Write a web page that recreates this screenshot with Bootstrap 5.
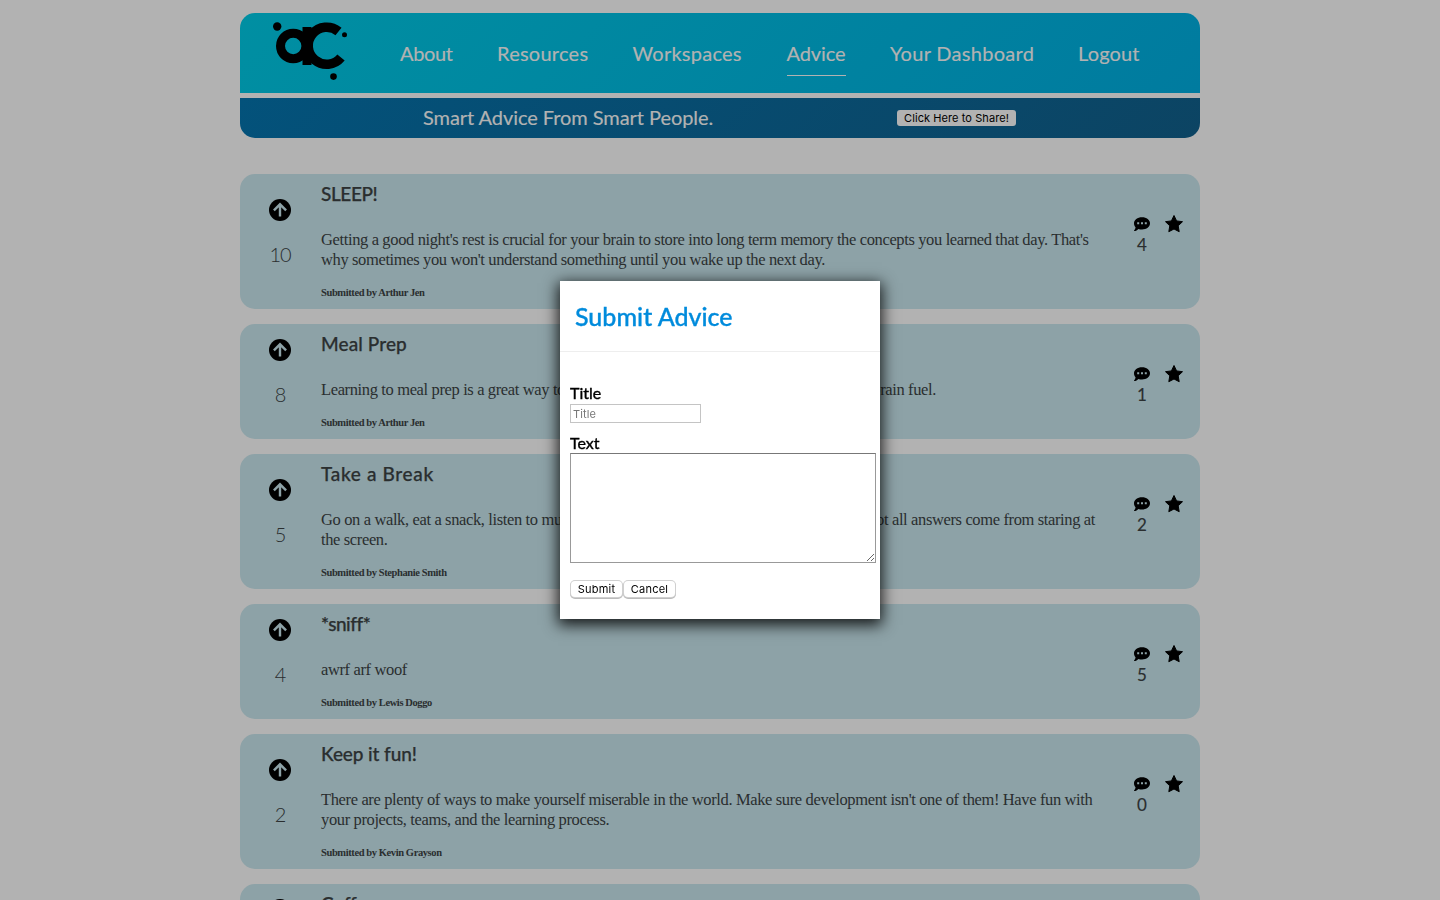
<!DOCTYPE html>
<html lang="en">
<head>
<meta charset="utf-8">
<title>Advice</title>
<link href="https://cdn.jsdelivr.net/npm/bootstrap@5.3.0/dist/css/bootstrap.min.css" rel="stylesheet">
<script src="https://cdn.jsdelivr.net/npm/bootstrap@5.3.0/dist/js/bootstrap.bundle.min.js"></script>
<style>
body{background:#b2b2b2;font-family:Lato,sans-serif;color:#2a2e2f;height:900px;overflow:hidden;line-height:20px}
.page{width:960px;height:900px;overflow:hidden;padding-top:13px}
.topbar{height:80px;border-radius:15px 15px 0 0;background:linear-gradient(135deg,#008fa2,#007b9f);padding-left:32px}
.logo{width:77px;height:60px;margin-top:8px}
.mainnav{margin-left:51px;padding-top:19px}
.mainnav a{color:#b2b2b2;font-size:20px;line-height:42px;height:44px;margin-right:44.5px;text-decoration:none;white-space:nowrap;-webkit-text-stroke:.2px}
.mainnav a.active{border-bottom:1px solid #b2b2b2}
.w1{width:52.5px;letter-spacing:-.35px}.w2{width:91px;letter-spacing:.25px}.w3{width:109.500px;letter-spacing:.25px}.w4{width:59px;letter-spacing:-.1px}.w5{width:143.500px;letter-spacing:.3px}.w6{width:62px;letter-spacing:.15px}
.subbar{height:40px;margin-top:5px;border-radius:0 0 15px 15px;background:linear-gradient(135deg,#03527b,#0c4463);color:#b2b2b2}
.slogan{font-size:20px;margin:-2px 0 0 183px;width:474px;letter-spacing:-.06px;-webkit-text-stroke:.2px}
.mini{font:11px/16px Inter,sans-serif;letter-spacing:.08px;border:0;border-radius:3px;padding:0 7px;white-space:nowrap;color:#000}
.share{background:#b2b2b2;width:119px;height:16px}
.tips{padding-top:36px}
.tip{background:#8da2a7;border-radius:15px;margin-bottom:15px;height:115px}
.tip.tall{height:135px}
.vote{width:80px;padding-bottom:20px}
.vote svg{width:22px;height:22px}
.vote span{font-size:20px;font-weight:300;margin-top:23px;letter-spacing:-1px}
.words{width:790px;padding:10px 0 0 1px}
.words h2{font-size:19px;line-height:20px;margin:0 0 26px;font-weight:500;-webkit-text-stroke:.25px}
.words .copy{font:16.5px/20px "Liberation Serif",serif;letter-spacing:-.37px;margin:0 0 13px;white-space:nowrap}
.words footer{font:bold 10.5px/20px "Liberation Serif",serif;letter-spacing:-.4px}
.acts{margin-left:24px;padding-top:40px}
.acts svg{height:20px;display:block}
.acts .star{margin-left:14.5px}
.acts .cnt{font-size:17px;line-height:21px;text-align:center;-webkit-text-stroke:.15px}
.dialog{position:fixed;left:560px;top:281px;width:320px;height:338px;background:#fff;box-shadow:0 4px 14px 2px rgba(0,0,0,.85);color:#000}
.dialog h1{font-size:25px;line-height:70px;height:71px;margin:0;padding-left:15px;color:#008bdc;border-bottom:1px solid #eee;-webkit-text-stroke:.35px}
.dialog form{padding:30px 4px 0 10px}
.dialog label{display:block;font-size:16px;line-height:19px;height:21px;padding-top:1px;-webkit-text-stroke:.4px}
.dialog input{display:block;width:131px;height:19px;border:1px solid #c4c4c4;padding:0 2px;font:11px Inter,sans-serif;letter-spacing:.1px;margin:1px 0 9px;outline:0}
.dialog input::placeholder{color:#777}
.dialog textarea{display:block;width:306px;height:110px;border:1px solid #999;border-top-color:#777;margin-bottom:18px}
.dialog .mini{background:#fff;width:51px;height:16px;padding:0;margin:0 1px;letter-spacing:.25px;border-radius:4px;box-shadow:0 0 0 1px #d0d0d0,0 1px 0 1px #bbb}
</style>
</head>
<body>
<svg width="0" height="0" class="position-absolute">
<symbol id="up" viewBox="0 0 22 22"><circle cx="11" cy="11" r="11"/><path d="M11 17.500V5.500M4.900 11.400L11 5.300l6.100 6.100" fill="none" stroke="#8da2a7" stroke-width="2.400"/></symbol>
<symbol id="chat" viewBox="0 0 16 20"><path d="M8 3.200c4.600 0 8 2.700 8 6.100s-3.400 6.200-8 6.200c-1.300 0-2.500-.2-3.600-.6C3.300 15.800 1.900 17 .2 17c-.3 0-.3-.4-.1-.6.8-.8 1.300-1.700 1.500-2.900C.6 12.400 0 10.900 0 9.300 0 5.900 3.400 3.200 8 3.200z"/><path d="M3.200 8.300h2v2h-2zM7 8.300h2v2H7zM10.800 8.300h2v2h-2z" fill="#8da2a7"/></symbol>
<symbol id="star" viewBox="0 0 18 20"><path d="M9 1.500l2.600 5.400 5.900.8-4.300 4.100 1 5.900L9 15l-5.200 2.700 1-5.900L.5 7.700l5.900-.8z" stroke="#000" stroke-width="1" stroke-linejoin="round"/></symbol>
</svg>
<main class="page mx-auto">
<header class="topbar d-flex">
<svg class="logo flex-shrink-0" viewBox="0 0 77 60"><circle cx="5.200" cy="5.500" r="4.200"/><circle cx="72.500" cy="13.700" r="2.500"/><circle cx="61.500" cy="55.600" r="3.300"/><circle cx="21.200" cy="25" r="12.700" fill="none" stroke="#000" stroke-width="9"/><path d="M30.500 6h9v38h-9z"/><path d="M66.500 10.500A18.500 18.500 0 1 0 69 36.500" fill="none" stroke="#000" stroke-width="9.500"/></svg>
<nav class="mainnav d-flex"><a href="#" class="w1">About</a><a href="#" class="w2">Resources</a><a href="#" class="w3">Workspaces</a><a href="#" class="w4 active">Advice</a><a href="#" class="w5">Your Dashboard</a><a href="#" class="w6">Logout</a></nav>
</header>
<div class="subbar d-flex align-items-center"><div class="slogan">Smart Advice From Smart People.</div><button class="mini share">Click Here to Share!</button></div>
<section id="tips" class="tips"></section>
</main>
<div class="dialog">
<h1>Submit Advice</h1>
<form><label>Title</label><input placeholder="Title"><label>Text</label><textarea></textarea><div class="d-flex"><button type="button" class="mini">Submit</button><button type="button" class="mini">Cancel</button></div></form>
</div>
<script>
// title, votes, lines ([start, end, width] spreads a line over a width), author, comments, title tracking
const tips=[
["SLEEP!",10,["Getting a good night's rest is crucial for your brain to store into long term memory the concepts you learned that day. That's","why sometimes you won't understand something until you wake up the next day."],"Arthur Jen",4,-.4],
["Meal Prep",8,[["Learning to meal prep is a great way to save time and money","and get good brain fuel.",615]],"Arthur Jen",1,.1],
["Take a Break",5,[["Go on a walk, eat a snack, listen to music, or do anything that relaxes you.","Not all answers come from staring at",774],"the screen."],"Stephanie Smith",2,.65],
["*sniff*",4,["awrf arf woof"],"Lewis Doggo",5,-.5],
["Keep it fun!",2,["There are plenty of ways to make yourself miserable in the world. Make sure development isn't one of them! Have fun with","your projects, teams, and the learning process."],"Kevin Grayson",0,-.1],
["Coffee",1,[],"Kevin Grayson",0,0]];
const line=s=>Array.isArray(s)?`<div class="d-flex justify-content-between" style="width:${s[2]}px"><span>${s[0]}</span><span>${s[1]}</span></div>`:`<div>${s}</div>`;
document.getElementById('tips').innerHTML=tips.map(([t,n,l,by,c,k])=>`<article class="tip d-flex ${l.length>1?'tall':''}"><div class="vote d-flex flex-column align-items-center justify-content-center"><svg><use href="#up"/></svg>${l.length?`<span>${n}</span>`:'<span>&nbsp;</span>'}</div><div class="words"><h2 style="letter-spacing:${k}px">${t}</h2>${l.length?`<div class="copy">${l.map(line).join('')}</div><footer>Submitted by ${by}</footer>`:''}</div>${l.length?`<div class="acts d-flex"><div><svg width="16"><use href="#chat"/></svg><div class="cnt">${c}</div></div><svg class="star" width="18"><use href="#star"/></svg></div>`:''}</article>`).join('');
</script>
</body>
</html>
